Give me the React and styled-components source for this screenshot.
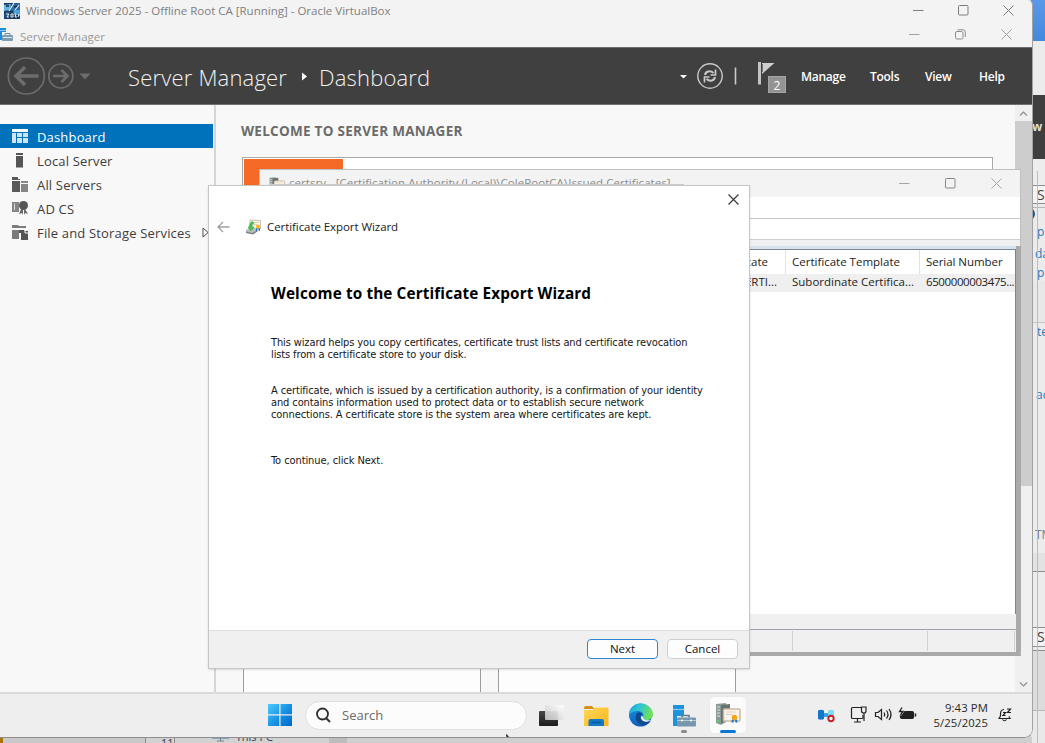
import React from "react";
import styled, { createGlobalStyle, css } from "styled-components";

const Global = createGlobalStyle`
  html, body { margin: 0; overflow: hidden; }
  * { box-sizing: border-box; }
  svg { display: block; flex: none; }
`;

const ui = `"Open Sans", "Noto Sans", sans-serif`;
const tahoma = `"DejaVu Sans Condensed", "DejaVu Sans", sans-serif`;

/* ---------- Desktop and the windows behind ---------- */
const Desktop = styled.div`
  position: relative;
  width: 1045px;
  height: 743px;
  overflow: hidden;
  background: #cfcfcf;
  font-family: ${ui};
  color: #1b1b1b;
`;

const BackEdge = styled.div`
  position: absolute;
  top: 0;
  right: 0;
  width: 14px;
  height: 743px;
  display: flex;
  flex-direction: column;
  overflow: hidden;
`;

const Band = styled.div`
  flex: none;
  height: ${(p) => p.$h}px;
  background: ${(p) => p.$bg};
  border-bottom: ${(p) => (p.$line ? `1px solid ${p.$line}` : "0")};
  padding-left: ${(p) => p.$pad ?? 7}px;
  display: flex;
  align-items: center;
  font-size: ${(p) => p.$size ?? 12}px;
  font-weight: ${(p) => (p.$bold ? 700 : 400)};
  color: ${(p) => p.$fg ?? "#1f79ba"};
  white-space: nowrap;
  overflow: hidden;
  line-height: 1;
`;

const BackDivider = styled.div`
  position: absolute;
  left: 1037px;
  top: 171px;
  bottom: 0;
  width: 1px;
  background: #bdbdbd;
`;

const BackDot = styled.div`
  position: absolute;
  left: 1024px;
  top: 208px;
  width: 11px;
  height: 12px;
  border-radius: 50%;
  background: #14568f;
`;

const BackBottom = styled.div`
  position: absolute;
  left: 0;
  top: 737px;
  width: 1032px;
  height: 6px;
  display: flex;
  overflow: hidden;
  background: #cfcfcf;
`;

const BottomPiece = styled.div`
  flex: none;
  width: ${(p) => p.$w}px;
  height: 6px;
  background: ${(p) => p.$bg};
  border-right: ${(p) => (p.$edge ? "1px solid #8b8b8b" : "0")};
  padding-left: ${(p) => p.$pad ?? 0}px;
  font-size: 11px;
  line-height: ${(p) => p.$lh ?? 12}px;
  color: #333c55;
  white-space: nowrap;
  overflow: hidden;
  display: flex;
`;

/* ---------- Virtual machine window ---------- */
const MachineWindow = styled.div`
  position: absolute;
  left: 0;
  top: 0;
  width: 1033px;
  height: 738px;
  display: flex;
  flex-direction: column;
  overflow: hidden;
  background: #f3f3f3;
  border-right: 1px solid #a2a2a2;
  border-bottom: 1px solid #8f8f8f;
  border-radius: 0 5px 9px 0;
`;

const TitleBar = styled.div`
  flex: none;
  height: ${(p) => p.$h}px;
  padding: 0 ${(p) => p.$right}px 0 ${(p) => p.$left}px;
  display: flex;
  align-items: center;
  gap: ${(p) => p.$gap}px;
  color: ${(p) => p.$fg};
`;

const Label = styled.span`
  font-size: ${(p) => p.$size}px;
  letter-spacing: ${(p) => p.$ls ?? 0}px;
  line-height: 16px;
  padding-top: ${(p) => p.$drop ?? 0}px;
  padding-bottom: ${(p) => p.$lift ?? 0}px;
  white-space: nowrap;
`;

const WindowButtons = styled.div`
  margin-left: auto;
  display: flex;
  align-items: center;
  gap: ${(p) => p.$gap}px;
`;

const Header = styled.header`
  flex: none;
  height: 58px;
  display: flex;
  align-items: center;
  background: #404040;
  border-top: 1px solid #6d6d6d;
  border-bottom: 1px solid #707070;
  color: #fff;
  padding: 0 27px 0 7px;
`;

const Crumbs = styled.div`
  display: flex;
  align-items: center;
  margin-left: 37px;
  padding-top: 2px;
  font-size: 22px;
  line-height: 30px;
  font-weight: 300;
  color: #f2f2f2;
  white-space: nowrap;
`;

const Crumb = styled.span`
  width: ${(p) => p.$w}px;
  letter-spacing: 0.18px;
`;

const CrumbSeparator = styled.span`
  margin-right: 12px;
`;

const HeaderTools = styled.div`
  margin-left: auto;
  display: flex;
  align-items: center;
`;

const FlagHolder = styled.div`
  position: relative;
  width: 30px;
  height: 36px;
  margin-left: 20px;
  padding-top: 4px;
`;

const FlagBadge = styled.span`
  position: absolute;
  left: 11px;
  top: 18px;
  width: 18px;
  height: 17px;
  background: #949292;
  border: 1px solid #a5a5a5;
  font-size: 12px;
  line-height: 17px;
  text-align: center;
`;

const Menu = styled.nav`
  display: flex;
  margin-left: 14px;
  padding-top: 2px;
`;

const MenuItem = styled.span`
  width: ${(p) => p.$w}px;
  font-size: 12px;
  line-height: 18px;
  font-weight: 600;
  letter-spacing: -0.27px;
  white-space: nowrap;
`;

const Body = styled.div`
  flex: none;
  height: 587px;
  display: flex;
  background: #f8f8f8;
`;

const Sidebar = styled.aside`
  width: 216px;
  padding-top: 19px;
  border-right: 2px solid #d6d6d6;
`;

const NavItem = styled.div`
  height: 24px;
  width: 213px;
  padding: 0 4px 0 11px;
  display: flex;
  align-items: center;
  gap: 8px;
  font-size: 13px;
  letter-spacing: 0.17px;
  white-space: nowrap;
  color: #3d3d3d;
  ${(p) =>
    p.$active &&
    css`
      background: #0072bc;
      color: #fff;
    `}
`;

const NavText = styled.span`
  line-height: 18px;
  padding-top: 2px;
  flex: 1;
`;

const Main = styled.main`
  flex: 1;
  display: flex;
  flex-direction: column;
  padding: 16px 23px 0 26px;
  overflow: hidden;
`;

const SectionTitle = styled.h1`
  margin: 0 0 0 -1px;
  height: 36px;
  font-size: 13.5px;
  line-height: 21px;
  font-weight: 700;
  letter-spacing: 0.28px;
  color: #6b6b6b;
`;

const WelcomePanel = styled.section`
  flex: none;
  width: 751px;
  height: 400px;
  padding: 1px;
  background: #fff;
  border: 1px solid #a9a9a9;
`;

const QuickStart = styled.div`
  width: 99px;
  height: 200px;
  background: #f56a26;
`;

const TileRow = styled.div`
  flex: 1;
  margin: 60px 0 0 1px;
  display: flex;
  gap: 17px;
`;

const Tile = styled.div`
  width: 238px;
  background: #fdfdfd;
  border: 1px solid #9e9e9e;
  border-bottom: 0;
`;

const ScrollBar = styled.div`
  width: 17px;
  display: flex;
  flex-direction: column;
  align-items: center;
  justify-content: space-between;
  background: #f0f0f0;
  padding: 6px 0 5px;
`;

const ScrollThumb = styled.div`
  width: 17px;
  height: 365px;
  margin-top: 5px;
  margin-bottom: auto;
  background: #cdcdcd;
`;

/* ---------- certsrv console ---------- */
const Console = styled.div`
  position: absolute;
  left: 259px;
  top: 169px;
  width: 762px;
  height: 487px;
  display: flex;
  flex-direction: column;
  background: #fff;
  border: 1px solid #bfbfbf;
  border-bottom: 4px solid #a9a9a9;
`;

const ConsoleTitle = styled.div`
  flex: none;
  height: 27px;
  display: flex;
  align-items: center;
  gap: 4px;
  padding: 0 18px 0 9px;
  background: #f3f3f3;
  color: #8c8c8c;
`;

const CaptionEdge = styled.div`
  position: absolute;
  left: 9px;
  top: 14px;
  width: 415px;
  height: 6px;
  border-top: 1px solid #cdcdcd;
  border-right: 1px solid #bdbdbd;
`;

const ConsoleBar = styled.div`
  flex: none;
  height: ${(p) => p.$h}px;
  background: ${(p) => p.$bg};
  border-bottom: ${(p) => (p.$line ? `1px solid ${p.$line}` : "0")};
`;

const ConsoleBody = styled.div`
  flex: 1;
  margin-right: -1px;
  display: flex;
  flex-direction: column;
  border-right: 5px solid #aaa;
`;

const List = styled.div`
  flex: none;
  height: 365px;
  display: flex;
  flex-direction: column;
  border-top: 1px solid #7d848d;
  border-right: 1px solid #7d848d;
`;

const ListRow = styled.div`
  flex: none;
  height: ${(p) => p.$h}px;
  padding-left: 481px;
  display: flex;
  background: ${(p) => p.$bg};
`;

const Cell = styled.div`
  width: ${(p) => p.$w}px;
  padding-left: ${(p) => p.$pad ?? 6}px;
  padding-right: ${(p) => p.$end ?? 0}px;
  text-align: ${(p) => (p.$end ? "right" : "left")};
  border-right: 1px solid ${(p) => p.$line ?? "transparent"};
  font-size: 11.5px;
  line-height: ${(p) => p.$lh}px;
  letter-spacing: ${(p) => p.$ls ?? 0}px;
  color: #1c1c1c;
  white-space: nowrap;
`;

const StatusBar = styled.div`
  flex: 1;
  display: flex;
  padding: 1px 0 1px;
  background: #f0f0f0;
  border-top: 1px solid #9ea1ab;
`;

const StatusPane = styled.div`
  width: ${(p) => p.$w}px;
  border-right: 1px solid #d0d0d0;
`;

/* ---------- Wizard ---------- */
const Wizard = styled.div`
  position: absolute;
  left: 208px;
  top: 185px;
  width: 542px;
  height: 484px;
  display: flex;
  flex-direction: column;
  background: #fff;
  border: 1px solid #c6c6c6;
  box-shadow: 0 1px 2px rgba(0, 0, 0, 0.12);
`;

const WizardClose = styled.div`
  display: flex;
  justify-content: flex-end;
  padding: 8px 10px 0 0;
  height: 28px;
`;

const WizardTitle = styled.div`
  display: flex;
  align-items: center;
  height: 26px;
  padding-left: 8px;
  color: #222;
`;

const WizardName = styled.div`
  display: flex;
  align-items: center;
  gap: 5px;
  margin-left: 15px;
`;

const WizardContent = styled.div`
  flex: 1;
  padding: 43px 30px 0 62px;
`;

const WizardHeading = styled.h2`
  margin: 0 0 34px;
  font-size: 15.3px;
  line-height: 20px;
  font-weight: 700;
  letter-spacing: 0.13px;
  color: #000;
`;

const Paragraph = styled.p`
  margin: 0 0 ${(p) => p.$after}px;
  font-family: ${tahoma};
  font-size: 11px;
  line-height: 12px;
  color: #161616;
`;

const TextLine = styled.span`
  display: block;
  white-space: nowrap;
  letter-spacing: ${(p) => p.$ls ?? -0.125}px;
`;

const WizardFooter = styled.div`
  flex: none;
  height: 38px;
  display: flex;
  justify-content: flex-end;
  gap: 9px;
  padding: 8px 11px 0 0;
  background: #f0f0f0;
  border-top: 1px solid #dedede;
`;

const Button = styled.button`
  width: 71px;
  height: 20px;
  padding: 0;
  border: 1px solid ${(p) => (p.$primary ? "#2f86d0" : "#cfcfcf")};
  border-radius: 4px;
  background: #fdfdfd;
  font-family: ${ui};
  font-size: 11.5px;
  line-height: 18px;
  color: #111;
`;

/* ---------- Taskbar ---------- */
const Taskbar = styled.footer`
  flex: 1;
  display: flex;
  align-items: center;
  padding: 0 20px 1px 268px;
  background: #eeeeee;
  border-top: 2px solid #dadada;
`;

const SearchBox = styled.div`
  width: 222px;
  height: 29px;
  margin-left: 13px;
  padding-left: 9px;
  display: flex;
  align-items: center;
  gap: 10px;
  border: 1px solid #e0e0e0;
  border-radius: 15px;
  background: #fcfcfc;
  font-size: 13px;
  color: #6a6a6a;
`;

const TaskIcon = styled.div`
  width: ${(p) => p.$w}px;
  height: 36px;
  margin-left: ${(p) => p.$ml}px;
  display: flex;
  flex-direction: column;
  align-items: center;
  justify-content: flex-end;
  gap: 3px;
  border-radius: 4px;
  background: ${(p) => (p.$active ? "#fbfbfb" : "transparent")};
  box-shadow: ${(p) => (p.$active ? "2px 0 0 -1px #f7f7f7, 0 0 1px #d0d0d0" : "none")};
`;

const Indicator = styled.div`
  width: ${(p) => p.$w}px;
  height: 3px;
  border-radius: 2px;
  background: ${(p) => p.$bg};
`;

const Tray = styled.div`
  margin-left: auto;
  display: flex;
  align-items: center;
`;

const Clock = styled.div`
  width: 58px;
  margin: -1px 10px 0 12px;
  text-align: right;
  font-size: 11.3px;
  letter-spacing: 0.12px;
  line-height: 15px;
  color: #2a2a2a;
  white-space: nowrap;
`;

const Pointer = styled.div`
  position: absolute;
  left: 505px;
  top: 733px;
`;

/* ---------- Icons ---------- */
const Minimize = ({ c }) => (
  <svg width="11" height="11" fill="none" stroke={c}><path d="M0 5.500H10.500" /></svg>
);
const Maximize = ({ c }) => (
  <svg width="11" height="11" fill="none" stroke={c}><rect x=".5" y=".5" width="9.500" height="9.500" rx="1" /></svg>
);
const Restore = ({ c }) => (
  <svg width="11" height="11" fill="none" stroke={c}>
    <rect x=".5" y="2.500" width="7.500" height="7.500" rx="1.500" />
    <path d="M2.500 .8H8Q10.300 .8 10.300 3V8" />
  </svg>
);
const Close = ({ c, s = 11, w = 1 }) => (
  <svg width={s} height={s} viewBox="0 0 11 11" fill="none" stroke={c} strokeWidth={w}><path d="M.5 .5L10.500 10.500M10.500 .5L.5 10.500" /></svg>
);
const Chevron = ({ up }) => (
  <svg width="9" height="5" fill="none" stroke="#8f8f8f" strokeWidth="1.200"><path d={up ? "M1 4.500L4.500 1L8 4.500" : "M1 .5L4.500 4L8 .5"} /></svg>
);

const MachineIcon = () => (
  <svg width="16" height="16">
    <rect width="16" height="16" fill="#173a5e" />
    <path d="M0 2L7 1L6 7L0 8Z" fill="#67b5e6" />
    <path d="M8 1L16 0V7L7 8Z" fill="#2c6da5" />
    <path d="M1 9L6 8L4 15H0Z" fill="#1d4f80" />
    <path d="M10 7H16V13L9 10Z" fill="#4f9fdb" />
    <path d="M10 0L5 8M15 2L11 7" stroke="#d8ecf8" strokeWidth="1.200" />
    <path d="M2 3H5M10 4L13 3" stroke="#10283f" strokeWidth="1.500" />
    <path d="M2 11H5L3 14H5M7 11H9V14H7ZM10 11H12L11 14H13M15 11L14 14" stroke="#e2edf5" fill="none" />
  </svg>
);

const ManagerSmall = () => (
  <svg width="14" height="14" viewBox="0 -1 14 14">
    <path d="M0 0H6V4H2V12H0Z" fill="#1d8fdd" />
    <path d="M0 2.500H6" stroke="#8bc5ee" />
    <path d="M5 7.500V5.500H10V7.500" stroke="#6d8ba1" fill="none" />
    <rect x="2" y="7" width="11" height="6" rx="1" fill="#7f9cb1" />
    <path d="M3 9.500H12" stroke="#dfe8ee" />
  </svg>
);

const NavArrows = () => (
  <svg width="84" height="38" fill="none" stroke="#6c6c6c">
    <circle cx="19.300" cy="19" r="18" strokeWidth="1.700" />
    <path d="M31.500 19H9M18 10L9 19L18 28" strokeWidth="3.500" />
    <circle cx="53.800" cy="19" r="12" strokeWidth="1.700" />
    <path d="M46 19H60M54.500 13L60.500 19L54.500 25" strokeWidth="2.600" />
    <path d="M72.500 16.500H83.500L78 22.500Z" fill="#6c6c6c" stroke="none" />
  </svg>
);

const CrumbArrow = () => (
  <svg width="5" height="11"><path d="M0 .5L5 4.500L0 8.500Z" fill="#fff" /></svg>
);

const RefreshGroup = () => (
  <svg width="57" height="26" fill="none" stroke="#c9c9c9">
    <path d="M0 12H7L3.500 15.500Z" fill="#fff" stroke="none" />
    <circle cx="30" cy="13" r="12.200" strokeWidth="1.400" />
    <path d="M25 12C25.500 8.500 30 7 33.500 10M35 14C34.500 17.500 30 19 26.500 16" strokeWidth="2" />
    <path d="M35.500 6.500V12H30.500M24.500 19.500V14H29.500" strokeWidth="1.700" />
    <path d="M55.500 4.500V21.500" strokeWidth="1.600" />
  </svg>
);

const Flag = () => (
  <svg width="18" height="23">
    <rect x="1" width="3" height="22.500" fill="#c4c4c4" />
    <path d="M5 1H17.500L5 12Z" fill="#cfcfcf" />
    <path d="M5.500 2V10" stroke="#777" />
  </svg>
);

const NavIcons = {
  dashboard: (
    <svg width="18" height="16">
      <path d="M1 1H17V4H1Z" fill="#fff" />
      <path d="M1 5H5V15H1ZM6 5H11V9H6ZM12 5H17V9H12ZM6 10H11V15H6ZM12 10H17V15H12Z" fill="#cfe5f3" />
    </svg>
  ),
  local: (
    <svg width="18" height="16"><path d="M5 1H12V3H5ZM5 4H12V15.500H5Z" fill="#555" /></svg>
  ),
  all: (
    <svg width="18" height="16" viewBox="0 -1 18 16">
      <path d="M1 0H7V2H9V3H1ZM1 4H9V15H1Z" fill="#595959" />
      <path d="M10 4H17V6H10ZM10 7H17V15H10Z" fill="#858585" />
    </svg>
  ),
  adcs: (
    <svg width="18" height="16" viewBox="0 -1 18 16">
      <path d="M1 1H8V11H1Z" fill="#858585" />
      <path d="M3.500 2.500V9" stroke="#ddd" />
      <circle cx="12.500" cy="4.500" r="4.500" fill="#555" />
      <path d="M10 8L8 13L11 12L12 14V8ZM14 8L17 13L14 12L13 14V8Z" fill="#666" />
    </svg>
  ),
  files: (
    <svg width="18" height="16" viewBox="0 -1 18 16">
      <path d="M1 0H7L8 1H15V3H1ZM1 5H8V14H1Z" fill="#7b7b7b" />
      <path d="M8 5H13L14 6H17V15H10V8H8Z" fill="#555" />
      <path d="M14 5V8H18" stroke="#f8f8f8" fill="none" />
    </svg>
  ),
};

const CertServer = ({ s = 16 }) => (
  <svg width={s} height={s} viewBox="0 0 26 24">
    <path d="M1 2L11 1V20L6 23L1 21Z" fill="#8c9997" />
    <path d="M6 3L15 2V9H8V21H6Z" fill="#66736f" />
    <path d="M2 5H5M2 8H5M2 11H5M2 14H5" stroke="#dce4e1" />
    <rect x="2" y="18" width="2" height="2" fill="#55d868" />
    <rect x="8.500" y="7" width="16.500" height="12" rx="1" fill="#faf5ec" stroke="#cdb89e" strokeWidth="1.500" />
    <path d="M11 10H21M11 12.500H18" stroke="#ddd0bd" />
    <path d="M18 17.500L17.300 20.500M20.800 17.500L21.700 20.500" stroke="#2275cd" strokeWidth="2" />
    <circle cx="19.500" cy="15.500" r="2.700" fill="#f5a514" />
  </svg>
);

const BackArrow = () => (
  <svg width="13" height="12" fill="none" stroke="#a0a0a0" strokeWidth="1.300"><path d="M12.500 6H1M6 1L1 6L6 11" /></svg>
);

const ExportIcon = () => (
  <svg width="17" height="16">
    <path d="M5 1L15.500 1.500V10L5 9Z" fill="#fbf7ec" stroke="#b9b1a0" strokeWidth=".8" />
    <path d="M8 3.500H14M8 5.500H12" stroke="#d3c9b8" strokeWidth=".8" />
    <path d="M1 11L6 8L13 10.500L8 14.500L1 13Z" fill="#b8bdc2" />
    <path d="M1 12.500L7.500 14L12.500 11V12.500L8 15.500L1 14Z" fill="#777f85" />
    <path d="M7.500 2.500C4.500 4 4.500 6 4.800 8H3L5.800 11.800L9 8H7C6.800 6 7.200 5 9 4Z" fill="#42c943" stroke="#239b31" strokeWidth=".5" />
    <path d="M12 9L11.500 12M14 9L14.500 12" stroke="#2d6fbb" strokeWidth="1.300" />
    <circle cx="13" cy="7.500" r="2" fill="#f4b41f" />
  </svg>
);

const WindowsLogo = () => (
  <svg width="24" height="22">
    <defs>
      <linearGradient id="win" x1="0" y1="0" x2="24" y2="22" gradientUnits="userSpaceOnUse">
        <stop offset="0" stopColor="#4ccbfa" /><stop offset=".55" stopColor="#1690e2" /><stop offset="1" stopColor="#0068cc" />
      </linearGradient>
    </defs>
    <path d="M0 0H11.300V10.300H0ZM12.500 0H24V10.300H12.500ZM0 11.500H11.300V22H0ZM12.500 11.500H24V22H12.500Z" fill="url(#win)" />
  </svg>
);

const SearchIcon = () => (
  <svg width="17" height="16" fill="none" stroke="#2f2f2f" strokeWidth="1.800"><circle cx="7.500" cy="7" r="5.500" /><path d="M11 11L15 15" strokeWidth="2" /></svg>
);

const TaskView = () => (
  <svg width="25" height="22">
    <defs>
      <linearGradient id="tv" x1="0" y1="0" x2="0" y2="1"><stop offset="0" stopColor="#474747" /><stop offset="1" stopColor="#1d1d1d" /></linearGradient>
      <linearGradient id="tvl" x1="0" y1="1" x2="1" y2="0"><stop offset="0" stopColor="#c5c5c5" /><stop offset="1" stopColor="#fff" /></linearGradient>
    </defs>
    <rect x="0" y="6" width="19" height="15" rx="1" fill="url(#tv)" />
    <rect x="6" y="0" width="18.500" height="15" rx="1" fill="url(#tvl)" opacity=".92" />
  </svg>
);

const FolderIcon = () => (
  <svg width="25" height="21">
    <defs><linearGradient id="fo" x1="0" y1="0" x2="1" y2="1"><stop offset="0" stopColor="#ffd75a" /><stop offset="1" stopColor="#fbb51c" /></linearGradient></defs>
    <path d="M0 2Q0 0 2 0H8L10.500 3H0Z" fill="#d9920d" />
    <path d="M0 4H9L11 1.500H24.500V20H0Z" fill="url(#fo)" />
    <path d="M4.500 20V15Q4.500 13 6.500 13H18Q20 13 20 15V20Z" fill="#1478c8" />
    <path d="M7.500 16.500H17" stroke="#0b589e" strokeWidth="1.500" />
  </svg>
);

const EdgeIcon = () => (
  <svg width="26" height="24">
    <defs>
      <linearGradient id="e1" x1="0" y1="0" x2="1" y2=".3"><stop offset="0" stopColor="#1ba2e2" /><stop offset=".5" stopColor="#31c7cf" /><stop offset="1" stopColor="#6fe05a" /></linearGradient>
      <linearGradient id="e2" x1="0" y1="0" x2="0" y2="1"><stop offset="0" stopColor="#1a95e0" /><stop offset="1" stopColor="#0d5fc0" /></linearGradient>
    </defs>
    <circle cx="12.500" cy="12" r="11.500" fill="url(#e2)" />
    <path d="M1.300 9C3 3.500 7.500 .3 13 .4C19.500 .6 25 5.500 25 11.500C25 15 22 17 18.500 17C15.500 17 14 15.500 15 14C16.500 10.500 13.500 8 10 8C6 8 3 9.500 1 12Z" fill="url(#e1)" />
    <path d="M9 10C6.500 13 7.500 19 12 21.500C16 23.500 20.500 21.500 22.500 18C18.500 20 13.500 18.500 12.500 14.500C12 12.500 13 11.500 14.500 11.500C13.500 9.500 10.500 8.500 9 10Z" fill="#114a8b" />
    <path d="M13 14C12.500 17 16 19.500 20 18.500L24.500 16.500C22.500 17.800 15.500 18 15 14.500C15 13 14 12 13 14Z" fill="#eef3f7" />
  </svg>
);

const ManagerIcon = () => (
  <svg width="24" height="22">
    <path d="M1 0H12V11H5V21H1Z" fill="#1e92dd" />
    <path d="M1 4.500H12" stroke="#8acaf3" strokeWidth="1.200" />
    <path d="M10 12.500V10.500H17V12.500" stroke="#5f7d92" strokeWidth="1.600" fill="none" />
    <rect x="5" y="12.500" width="19" height="9" rx="1" fill="#7897ac" />
    <path d="M5 15.500H24" stroke="#b8cad6" />
    <circle cx="10" cy="15.500" r="1.100" fill="#fff" /><circle cx="19" cy="15.500" r="1.100" fill="#fff" />
  </svg>
);

const TrayIcons = () => (
  <svg width="100" height="18" fill="none" stroke="#222" strokeWidth="1.200">
    <path d="M0 4.500Q3 3 6 4.500V13Q3 14.500 0 13Z" fill="#1277c9" stroke="none" />
    <path d="M6 7H10V11H6Z" fill="#35a4e4" stroke="none" />
    <path d="M10 4.500Q13 3 16 4.500V12H10Z" fill="#7ddcf1" stroke="none" />
    <circle cx="13" cy="12.500" r="2.700" fill="#fff" stroke="#c81e2c" strokeWidth="1.900" />
    <path d="M43 1.500H34.500Q33.500 1.500 33.500 2.500V11.500Q33.500 12.500 34.500 12.500H44Q45 12.500 45 11.500V9M36 16H43M39.500 12.500V16" />
    <path d="M43.500 1H48V5Q48 7 46 7Q43.500 7 43.500 5ZM46 7V15" />
    <path d="M57.500 6.500H60L63.500 3.500V13.500L60 10.500H57.500Z" />
    <path d="M66 6.500Q67.500 8.500 66 10.500M68.500 4.500Q71.500 8.500 68.500 12.500M71 3Q75 8.500 71 14" />
    <rect x="82.500" y="5.500" width="13" height="7" rx="1.500" fill="#222" />
    <path d="M97.500 7.500V10.500" strokeWidth="1.500" />
    <path d="M84 1L81 6H84L82 9" stroke="#eee" strokeWidth="3" />
    <path d="M84 1.500L81.500 5.500H85L82.500 9" strokeWidth="1.300" />
  </svg>
);

const SnoozeBell = () => (
  <svg width="14" height="14" fill="none" stroke="#222" strokeWidth="1.200">
    <path d="M6 1.500C3.500 1.800 2.500 3.500 2.500 5.500V8L1 10.500H12L10.800 8.500M4.500 11.500Q6.500 14 8.500 11.500" />
    <path d="M5 4.500H7.500L5 7.500H7.500M9 1H12.500L9.500 4.500H13" />
  </svg>
);

const TreeArrow = () => (
  <svg width="8" height="11" fill="#fff" stroke="#4c4c4c"><path d="M2 1L7 5.500L2 10Z" /></svg>
);

const PcIcon = () => (
  <svg width="18" height="6"><path d="M0 0H17V1.500H0Z" fill="#2f7fae" /><path d="M8.500 1V4M5 4H12" stroke="#71828e" /></svg>
);

const PointerIcon = () => (
  <svg width="5" height="4"><path d="M1 .5L4.500 4H1Z" fill="#111" stroke="#fff" strokeWidth=".4" /></svg>
);

const navItems = [
  { key: "dashboard", text: "Dashboard", active: true },
  { key: "local", text: "Local Server" },
  { key: "all", text: "All Servers" },
  { key: "adcs", text: "AD CS" },
  { key: "files", text: "File and Storage Services" },
];

export default function App() {
  return (
    <Desktop>
      <Global />
      <BackEdge>
        <Band $h={41} $bg="linear-gradient(#5b98ea,#4389dc)" />
        <Band $h={54} $bg="#ececec" />
        <Band $h={64} $bg="#3f3f3f" $fg="#ddd" $bold $pad={1}>w</Band>
        <Band $h={27} $bg="#ededed" $line="#8e8e8e" />
        <Band $h={18} $bg="#f4f4f4" $line="#8e8e8e" $fg="#444" $size={14} $pad={6}>S</Band>
        <Band $h={4} $bg="#ebebeb" $line="#b5b5b5" />
        <Band $h={12} $bg="#ebebeb" />
        <Band $h={23} $bg="#ebebeb" $pad={6}>p</Band>
        <Band $h={22} $bg="#ebebeb" $pad={4}>da</Band>
        <Band $h={16} $bg="#ebebeb" $pad={6}>p</Band>
        <Band $h={42} $bg="#e8e8e8" $line="#c4c4c4" />
        <Band $h={18} $bg="#ececec" $pad={6}>te</Band>
        <Band $h={45} $bg="#ececec" />
        <Band $h={18} $bg="#ececec" $pad={5}>ac</Band>
        <Band $h={121} $bg="#ececec" />
        <Band $h={20} $bg="#ececec" $fg="#6f8292" $pad={4}>TM</Band>
        <Band $h={8} $bg="#ececec" />
        <Band $h={19} $bg="#e2e2e2" $line="#8e8e8e" />
        <Band $h={56} $bg="#ececec" $line="#8e8e8e" />
        <Band $h={19} $bg="#f1f1f1" $line="#8e8e8e" $fg="#444" $size={14} $pad={6}>S</Band>
        <Band $h={4} $bg="#ececec" $line="#8e8e8e" />
        <Band $h={60} $bg="#dcdcdc" $line="#b8b8b8" />
        <Band $h={40} $bg="#e9e9e9" />
      </BackEdge>
      <BackDivider />
      <BackDot />
      <BackBottom>
        <BottomPiece $w={3} $bg="#a8740c" />
        <BottomPiece $w={143} $bg="#c9c9c9" $edge />
        <BottomPiece $w={29} $bg="#d2d2d2" $edge $pad={15} $lh={12}>11</BottomPiece>
        <BottomPiece $w={154} $bg="#d2d2d2" $pad={37} $lh={0}><PcIcon />&nbsp;&nbsp;This PC</BottomPiece>
        <BottomPiece $w={18} $bg="#bdbdbd" />
      </BackBottom>

      <MachineWindow>
        <TitleBar $h={21} $left={4} $right={18} $gap={6} $fg="#7f7f7f">
          <MachineIcon />
          <Label $size={11.5} $drop={1}>Windows Server 2025 - Offline Root CA [Running] - Oracle VirtualBox</Label>
          <WindowButtons $gap={34}>
            <Minimize c="#7d7d7d" /><Maximize c="#7d7d7d" /><Close c="#7d7d7d" />
          </WindowButtons>
        </TitleBar>
        <TitleBar $h={26} $left={0} $right={20} $gap={6} $fg="#999">
          <ManagerSmall />
          <Label $size={11.5} $drop={5}>Server Manager</Label>
          <WindowButtons $gap={35}>
            <Minimize c="#a0a0a0" /><Restore c="#8d8d8d" /><Close c="#a0a0a0" />
          </WindowButtons>
        </TitleBar>
        <Header>
          <NavArrows />
          <Crumbs>
            <Crumb $w={174}>Server Manager</Crumb>
            <CrumbSeparator><CrumbArrow /></CrumbSeparator>
            <Crumb $w={120}>Dashboard</Crumb>
          </Crumbs>
          <HeaderTools>
            <RefreshGroup />
            <FlagHolder><Flag /><FlagBadge>2</FlagBadge></FlagHolder>
            <Menu>
              <MenuItem $w={69}>Manage</MenuItem>
              <MenuItem $w={55}>Tools</MenuItem>
              <MenuItem $w={54}>View</MenuItem>
              <MenuItem $w={26}>Help</MenuItem>
            </Menu>
          </HeaderTools>
        </Header>
        <Body>
          <Sidebar>
            {navItems.map((n) => (
              <NavItem key={n.key} $active={n.active}>
                {NavIcons[n.key]}
                <NavText>{n.text}</NavText>
                {n.key === "files" && <TreeArrow />}
              </NavItem>
            ))}
          </Sidebar>
          <Main>
            <SectionTitle>WELCOME TO SERVER MANAGER</SectionTitle>
            <WelcomePanel><QuickStart /></WelcomePanel>
            <TileRow><Tile /><Tile /></TileRow>
          </Main>
          <ScrollBar><Chevron up /><ScrollThumb /><Chevron /></ScrollBar>
        </Body>
        <Taskbar>
          <WindowsLogo />
          <SearchBox><SearchIcon />Search</SearchBox>
          <TaskIcon $w={25} $ml={12}><TaskView /><Indicator $w={6} $bg="transparent" /></TaskIcon>
          <TaskIcon $w={25} $ml={20}><FolderIcon /><Indicator $w={6} $bg="transparent" /></TaskIcon>
          <TaskIcon $w={26} $ml={19}><EdgeIcon /><Indicator $w={6} $bg="transparent" /></TaskIcon>
          <TaskIcon $w={24} $ml={18}><ManagerIcon /><Indicator $w={6} $bg="#8a8a8a" /></TaskIcon>
          <TaskIcon $w={35} $ml={14} $active><CertServer s={26} /><Indicator $w={16} $bg="#0a78d4" /></TaskIcon>
          <Tray><TrayIcons /><Clock>9:43 PM<br />5/25/2025</Clock><SnoozeBell /></Tray>
        </Taskbar>
      </MachineWindow>
      <Pointer><PointerIcon /></Pointer>

      <Console>
        <ConsoleTitle>
          <CertServer />
          <Label $size={11.5} $ls={0.04} $lift={2}>certsrv - [Certification Authority (Local)\ColeRootCA\Issued Certificates]</Label>
          <WindowButtons $gap={35}>
            <Minimize c="#a6a6a6" /><Maximize c="#858585" /><Close c="#a6a6a6" />
          </WindowButtons>
        </ConsoleTitle>
        <CaptionEdge />
        <ConsoleBar $h={22} $bg="#fff" $line="#c9c9c9" />
        <ConsoleBar $h={21} $bg="#fff" $line="#cfcfcf" />
        <ConsoleBar $h={6} $bg="#f0f0f0" />
        <ConsoleBody>
          <ConsoleBar $h={3} $bg="#d6e3ef" />
          <List>
            <ListRow $h={24} $bg="#fff">
              <Cell $w={45} $end={17} $pad={0} $lh={24} $line="#e2e2e2">icate</Cell>
              <Cell $w={134} $lh={24} $line="#e2e2e2">Certificate Template</Cell>
              <Cell $w={95} $lh={24} $ls={-0.05}>Serial Number</Cell>
            </ListRow>
            <ListRow $h={18} $bg="#efefef">
              <Cell $w={45} $end={8} $pad={0} $lh={16}>ERTI...</Cell>
              <Cell $w={134} $lh={16}>Subordinate Certifica...</Cell>
              <Cell $w={95} $lh={16} $ls={-0.4}>6500000003475...</Cell>
            </ListRow>
          </List>
          <ConsoleBar $h={15} $bg="#f0f0f0" />
          <StatusBar><StatusPane $w={533} /><StatusPane $w={135} /><StatusPane $w={87} /></StatusBar>
        </ConsoleBody>
      </Console>

      <Wizard>
        <WizardClose><Close c="#3a3a3a" w={1.2} /></WizardClose>
        <WizardTitle>
          <BackArrow />
          <WizardName>
            <ExportIcon />
            <Label $size={11.5} $ls={-0.07} $lift={1}>Certificate Export Wizard</Label>
          </WizardName>
        </WizardTitle>
        <WizardContent>
          <WizardHeading>Welcome to the Certificate Export Wizard</WizardHeading>
          <Paragraph $after={24}>
            <TextLine $ls={-0.12}>This wizard helps you copy certificates, certificate trust lists and certificate revocation</TextLine>
            <TextLine>lists from a certificate store to your disk.</TextLine>
          </Paragraph>
          <Paragraph $after={34}>
            <TextLine>A certificate, which is issued by a certification authority, is a confirmation of your identity</TextLine>
            <TextLine $ls={-0.11}>and contains information used to protect data or to establish secure network</TextLine>
            <TextLine $ls={-0.085}>connections. A certificate store is the system area where certificates are kept.</TextLine>
          </Paragraph>
          <Paragraph $after={0}><TextLine $ls={-0.08}>To continue, click Next.</TextLine></Paragraph>
        </WizardContent>
        <WizardFooter><Button $primary>Next</Button><Button>Cancel</Button></WizardFooter>
      </Wizard>
    </Desktop>
  );
}
